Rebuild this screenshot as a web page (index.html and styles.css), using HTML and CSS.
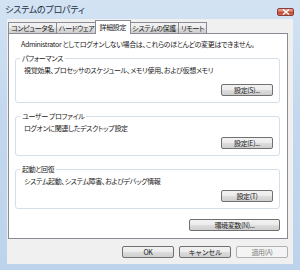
FILE: index.html
```html
<!DOCTYPE html>
<html lang="ja">
<head>
    <meta charset="UTF-8">
    <meta name="viewport" content="width=device-width, initial-scale=1.0">
    <link rel="stylesheet" href="styles.css">
    <title>システムのプロパティ</title>
</head>
<body>
    <div class="window">
        <header class="titlebar">
            <span class="titlebar__text">システムのプロパティ</span>
            <span class="titlebar__close">
                <svg viewBox="0 0 8 6" width="8" height="6">
                    <path d="M1 0.5l6 5M7 0.5l-6 5" stroke="#ffffff" stroke-width="1.4" fill="none"/>
                </svg>
            </span>
        </header>

        <div class="client">
            <nav class="tabs">
                <div class="tab">コンピュータ名</div>
                <div class="tab">ハードウェア</div>
                <div class="tab tab--active">詳細設定</div>
                <div class="tab">システムの保護</div>
                <div class="tab">リモート</div>
            </nav>

            <section class="panel">
                <p class="panel__note">Administrator としてログオンしない場合は、これらのほとんどの変更はできません。</p>

                <fieldset class="group">
                    <legend class="group__label">パフォーマンス</legend>
                    <p class="group__desc">視覚効果、プロセッサのスケジュール、メモリ使用、および仮想メモリ</p>
                    <div class="group__actions group__actions--loose">
                        <button class="btn">設定(S)...</button>
                    </div>
                </fieldset>

                <fieldset class="group">
                    <legend class="group__label">ユーザー プロファイル</legend>
                    <p class="group__desc">ログオンに関連したデスクトップ設定</p>
                    <div class="group__actions">
                        <button class="btn">設定(E)...</button>
                    </div>
                </fieldset>

                <fieldset class="group">
                    <legend class="group__label">起動と回復</legend>
                    <p class="group__desc">システム起動、システム障害、およびデバッグ情報</p>
                    <div class="group__actions">
                        <button class="btn">設定(T)</button>
                    </div>
                </fieldset>

                <div class="panel__footer">
                    <button class="btn btn--wide">環境変数(N)...</button>
                </div>
            </section>

            <div class="dialog-buttons">
                <button class="btn">OK</button>
                <button class="btn">キャンセル</button>
                <button class="btn" disabled>適用(A)</button>
            </div>
        </div>
    </div>
</body>
</html>
```

FILE: styles.css
```css
body {
    margin: 0;
    padding: 0;
    font-family: "Noto Sans CJK JP", "Noto Sans", sans-serif;
    font-size: 7px;
    font-feature-settings: "palt";
    letter-spacing: -0.35px;
    color: #1a1a1a;
}

.window {
    width: 300px;
    height: 270px;
    display: flex;
    flex-direction: column;
    background: linear-gradient(180deg, #d3e3f4 0%, #c3d8ee 40%, #bcd3eb 100%);
    overflow: hidden;
}

.titlebar {
    height: 19px;
    display: flex;
    align-items: flex-start;
    justify-content: space-between;
    padding: 0 6px 0 5px;
    box-sizing: border-box;
}
.titlebar__text {
    font-size: 9px;
    line-height: 12px;
    margin-top: 4px;
    letter-spacing: -0.2px;
    color: #1e2e44;
}
.titlebar__close {
    width: 17px;
    height: 8px;
    margin-top: 8px;
    display: flex;
    align-items: center;
    justify-content: center;
    border: 1px solid #8d3a3a;
    border-radius: 2px;
    box-sizing: border-box;
    background: linear-gradient(180deg, #e8a999 0%, #d4735f 45%, #c2442c 55%, #d0705a 100%);
}

.client {
    flex: 1;
    margin: 0 7px 6px 7px;
    padding: 3px 5px 4px 1px;
    background-color: #f0f0f0;
    display: flex;
    flex-direction: column;
}

.tabs {
    display: flex;
    align-items: flex-end;
    height: 11px;
}
.tab {
    height: 10px;
    line-height: 10px;
    padding: 0 2px;
    margin-right: -1px;
    border: 1px solid #898c95;
    border-bottom: none;
    background: linear-gradient(180deg, #f3f3f3 0%, #ebebeb 50%, #dddddd 51%, #cfcfcf 100%);
    white-space: nowrap;
}
.tab--active {
    height: 13px;
    line-height: 12px;
    margin: 0 -2px -1px -2px;
    padding: 0 4px;
    background: #ffffff;
    position: relative;
    z-index: 1;
}

.panel {
    border: 1px solid #898c95;
    background-color: #ffffff;
    padding: 5px 7px 7px 6px;
}
.panel__note {
    margin: 0 0 0 6px;
    line-height: 10px;
}
.panel__footer {
    display: flex;
    justify-content: flex-end;
    margin-top: 10px;
}

.group {
    margin: 4px 0 0 0;
    padding: 2px 6px 6px 4px;
    border: 1px solid #d5dfe5;
    border-radius: 3px;
}
.group + .group {
    margin-top: 8px;
}
.group__label {
    line-height: 10px;
    padding: 0 2px;
}
.group__desc {
    margin: 0 0 0 4px;
    line-height: 10px;
}
.group__actions {
    display: flex;
    justify-content: flex-end;
    margin-top: 4px;
}
.group__actions--loose {
    margin-top: 9px;
}

.btn {
    width: 52px;
    height: 12px;
    padding: 0;
    font-family: inherit;
    font-size: 7px;
    line-height: 10px;
    letter-spacing: -0.35px;
    color: #1a1a1a;
    border: 1px solid #707070;
    border-radius: 2px;
    background: linear-gradient(180deg, #f2f2f2 0%, #ebebeb 50%, #dddddd 51%, #cfcfcf 100%);
}
.btn--wide {
    width: 91px;
}
.btn:disabled {
    color: #838383;
    border-color: #adb2b5;
    background: #f4f4f4;
}

.dialog-buttons {
    display: flex;
    justify-content: flex-end;
    gap: 5px;
    margin-top: 7px;
}
```
